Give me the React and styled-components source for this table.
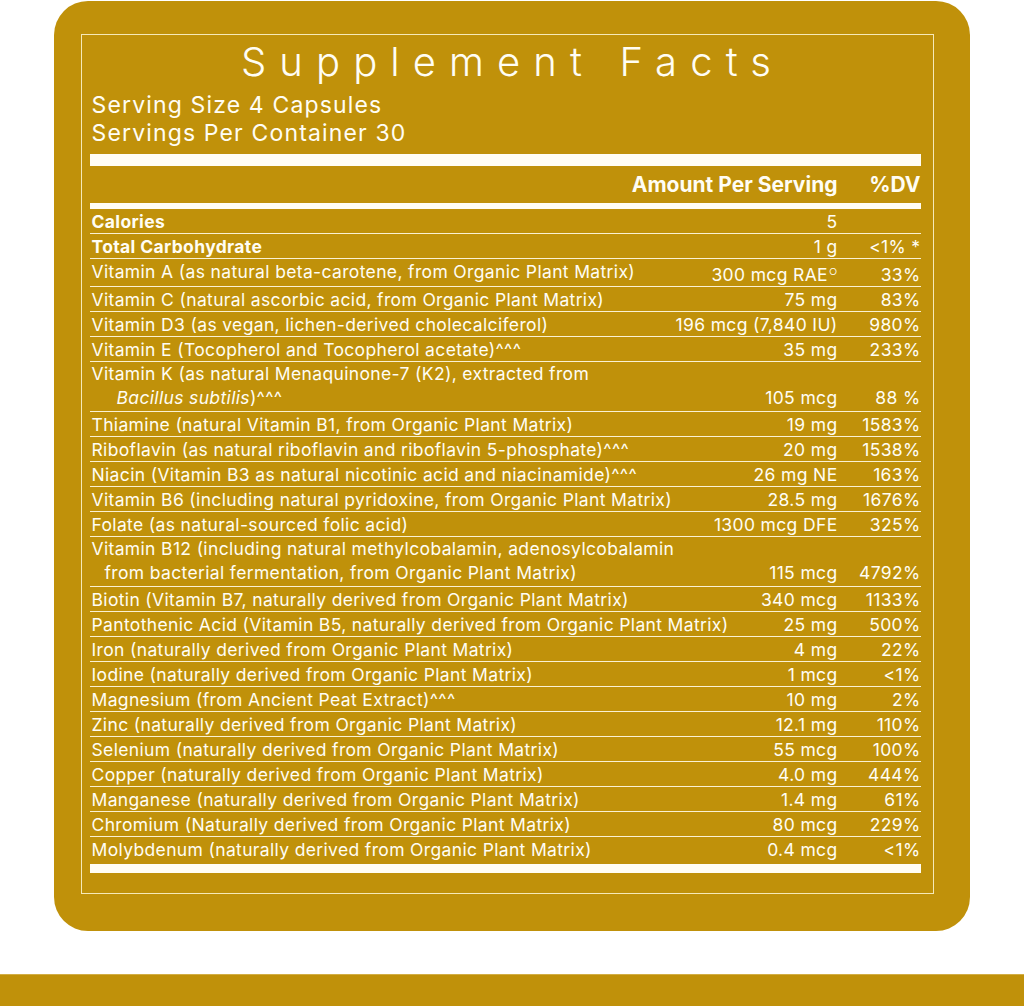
import React from "react";
import styled, { createGlobalStyle } from "styled-components";

const GOLD = "#c0910a";
const CREAM = "#fffdf4";

const GlobalStyle = createGlobalStyle`
  html, body {
    margin: 0;
    padding: 0;
    background: #ffffff;
  }
  body {
    font-family: Inter, "Liberation Sans", sans-serif;
    color: ${CREAM};
  }
`;

const nutrients = [
  { name: "Calories", amount: "5", dv: "", bold: true },
  { name: "Total Carbohydrate", amount: "1 g", dv: "<1% *", bold: true },
  { name: "Vitamin A (as natural beta-carotene, from Organic Plant Matrix)", amount: "300 mcg RAE", mark: true, dv: "33%" },
  { name: "Vitamin C (natural ascorbic acid, from Organic Plant Matrix)", amount: "75 mg", dv: "83%" },
  { name: "Vitamin D3 (as vegan, lichen-derived cholecalciferol)", amount: "196 mcg (7,840 IU)", dv: "980%" },
  { name: "Vitamin E (Tocopherol and Tocopherol acetate)^^^", amount: "35 mg", dv: "233%" },
  {
    name: "Vitamin K (as natural Menaquinone-7 (K2), extracted from",
    second: (
      <>
        <em>Bacillus subtilis</em>)^^^
      </>
    ),
    indent: 25,
    amount: "105 mcg",
    dv: "88 %",
  },
  { name: "Thiamine (natural Vitamin B1, from Organic Plant Matrix)", amount: "19 mg", dv: "1583%" },
  { name: "Riboflavin (as natural riboflavin and riboflavin 5-phosphate)^^^", amount: "20 mg", dv: "1538%" },
  { name: "Niacin (Vitamin B3 as natural nicotinic acid and niacinamide)^^^", amount: "26 mg NE", dv: "163%" },
  { name: "Vitamin B6 (including natural pyridoxine, from Organic Plant Matrix)", amount: "28.5 mg", dv: "1676%" },
  { name: "Folate (as natural-sourced folic acid)", amount: "1300 mcg DFE", dv: "325%" },
  {
    name: "Vitamin B12 (including natural methylcobalamin, adenosylcobalamin",
    second: "from bacterial fermentation, from Organic Plant Matrix)",
    indent: 13,
    amount: "115 mcg",
    dv: "4792%",
  },
  { name: "Biotin (Vitamin B7, naturally derived from Organic Plant Matrix)", amount: "340 mcg", dv: "1133%" },
  { name: "Pantothenic Acid (Vitamin B5, naturally derived from Organic Plant Matrix)", amount: "25 mg", dv: "500%" },
  { name: "Iron (naturally derived from Organic Plant Matrix)", amount: "4 mg", dv: "22%" },
  { name: "Iodine (naturally derived from Organic Plant Matrix)", amount: "1 mcg", dv: "<1%" },
  { name: "Magnesium (from Ancient Peat Extract)^^^", amount: "10 mg", dv: "2%" },
  { name: "Zinc (naturally derived from Organic Plant Matrix)", amount: "12.1 mg", dv: "110%" },
  { name: "Selenium (naturally derived from Organic Plant Matrix)", amount: "55 mcg", dv: "100%" },
  { name: "Copper (naturally derived from Organic Plant Matrix)", amount: "4.0 mg", dv: "444%" },
  { name: "Manganese (naturally derived from Organic Plant Matrix)", amount: "1.4 mg", dv: "61%" },
  { name: "Chromium (Naturally derived from Organic Plant Matrix)", amount: "80 mcg", dv: "229%" },
  { name: "Molybdenum (naturally derived from Organic Plant Matrix)", amount: "0.4 mcg", dv: "<1%" },
];

const App = () => {
  return (
    <>
      <GlobalStyle />
      <Page>
        <Card>
          <Frame>
            <Title>Supplement Facts</Title>
            <Serving>
              Serving Size 4 Capsules
              <br />
              Servings Per Container 30
            </Serving>
            <Bar $h={12} $top={7} />
            <HeaderRow>
              <span />
              <HeadCell>Amount Per Serving</HeadCell>
              <HeadCell>%DV</HeadCell>
            </HeaderRow>
            <Bar $h={6} />
            <Table>
              {nutrients.map((n) => (
                <Row key={n.name} $double={!!n.second} $bold={n.bold}>
                  <Name>
                    <Line>{n.name}</Line>
                    {n.second && <Line style={{ paddingLeft: n.indent }}>{n.second}</Line>}
                  </Name>
                  <Cell>
                    {n.amount}
                    {n.mark && <Mark>○</Mark>}
                  </Cell>
                  <Cell>{n.dv}</Cell>
                </Row>
              ))}
            </Table>
            <Bar $h={9} $top={3.6} />
          </Frame>
        </Card>
        <Stripe />
      </Page>
    </>
  );
};

export default App;

// Styled Components
const Page = styled.div`
  width: 1024px;
  height: 1006px;
  padding-top: 1px;
  box-sizing: border-box;
  display: flex;
  flex-direction: column;
  overflow: hidden;
`;

const Card = styled.div`
  margin-left: 54px;
  width: 916px;
  height: 931px;
  box-sizing: border-box;
  background: ${GOLD};
  border-radius: 34px;
  padding: 33px 36px 37px 27px;
  display: flex;
  flex-direction: column;
`;

const Frame = styled.div`
  flex: 1;
  border: 1.5px solid rgba(255, 248, 215, 0.85);
  padding: 2.5px 12.5px 0 7.5px;
  display: flex;
  flex-direction: column;
`;

const Title = styled.h1`
  margin: 0;
  padding-left: 15px;
  text-align: center;
  font-family: Inter, "Liberation Sans", sans-serif;
  font-weight: 300;
  font-size: 40px;
  line-height: 48px;
  letter-spacing: 13.1px;
`;

const Serving = styled.div`
  margin-top: 5px;
  padding-left: 2px;
  font-size: 23px;
  letter-spacing: 1.15px;
  line-height: 28px;
`;

const Bar = styled.div`
  height: ${(p) => p.$h}px;
  margin-top: ${(p) => p.$top || 0}px;
  background: ${CREAM};
`;

const HeaderRow = styled.div`
  display: grid;
  grid-template-columns: minmax(0, 1fr) auto 83px;
  padding: 7px 0 6px;
  font-size: 21px;
  font-weight: 700;
  line-height: 24px;
`;

const HeadCell = styled.div`
  text-align: right;
  white-space: nowrap;
`;

const Table = styled.div`
  display: flex;
  flex-direction: column;
`;

const Row = styled.div`
  display: grid;
  grid-template-columns: minmax(0, 1fr) auto 83px;
  padding: ${(p) => (p.$double ? "0" : "2px 0 0")};
  font-size: 17.5px;
  letter-spacing: 0.35px;
  line-height: ${(p) => (p.$double ? "24.5px" : "22px")};
  font-weight: ${(p) => (p.$bold ? 700 : 400)};
  border-bottom: 1.5px solid rgba(255, 250, 228, 0.92);

  &:last-child {
    border-bottom: none;
  }
`;

const Name = styled.div`
  min-width: 0;
  padding-left: 2px;
  white-space: nowrap;
`;

const Line = styled.div`
  em {
    font-style: italic;
  }
`;

const Cell = styled.div`
  align-self: end;
  text-align: right;
  white-space: nowrap;
  font-weight: 400;
`;

const Mark = styled.span`
  font-size: 9px;
  vertical-align: 6px;
  margin-left: 1px;
`;

const Stripe = styled.div`
  margin-top: 43px;
  height: 31px;
  flex-shrink: 0;
  background: ${GOLD};
  border-top: 1px solid #d2ae45;
`;
